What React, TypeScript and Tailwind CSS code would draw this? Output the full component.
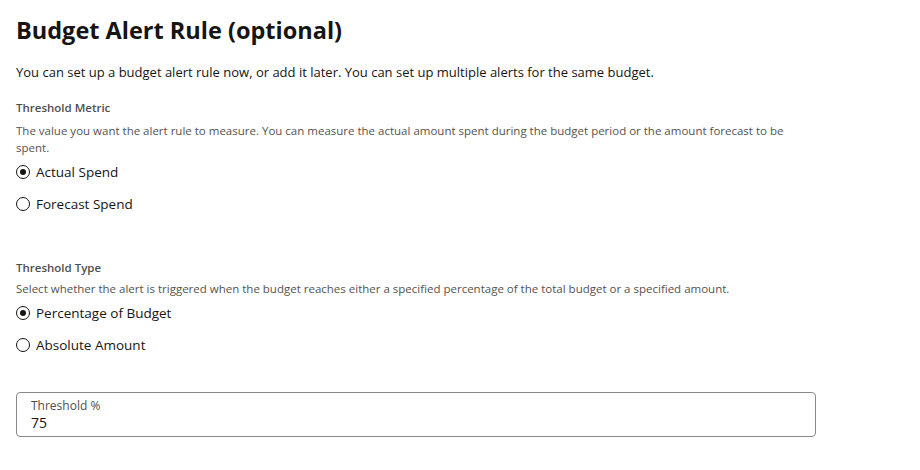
import React, { useState } from "react";

const font = { fontFamily: '"Open Sans", "Noto Sans", sans-serif' };

interface RadioOption {
  value: string;
  label: string;
}

function RadioGroup({
  options,
  value,
  onChange,
}: {
  options: RadioOption[];
  value: string;
  onChange: (v: string) => void;
}) {
  return (
    <div className="flex flex-col">
      {options.map((opt) => {
        const checked = opt.value === value;
        return (
          <label
            key={opt.value}
            className="flex h-8 cursor-pointer items-center gap-[6px] text-[13.5px] text-[#161513]"
            onClick={() => onChange(opt.value)}
          >
            <span className="flex size-[14px] items-center justify-center rounded-full border-[1.5px] border-[#161513]">
              {checked && <span className="size-[6px] rounded-full bg-[#161513]" />}
            </span>
            <span>{opt.label}</span>
          </label>
        );
      })}
    </div>
  );
}

export default function App() {
  const [metric, setMetric] = useState("actual");
  const [type, setType] = useState("percentage");

  return (
    <div className="min-h-[470px] bg-white" style={font}>
      <div className="ml-4 w-[800px] pt-[14px]">
        {/* Heading */}
        <h1 className="text-[23.5px] font-bold leading-8 text-[#161513]">
          Budget Alert Rule (optional)
        </h1>
        <p className="mt-[16px] text-[13px] leading-5 text-[#161513]">
          You can set up a budget alert rule now, or add it later. You can set up multiple alerts for the same budget.
        </p>

        {/* Threshold metric */}
        <div className="mt-[18px] text-[11.5px] font-semibold leading-4 text-[#4f4e4c]">Threshold Metric</div>
        <p className="mt-[6px] text-[11.5px] leading-[17px] text-[#55534f]">
          The value you want the alert rule to measure. You can measure the actual amount spent during the budget period or the amount forecast to be spent.
        </p>
        <RadioGroup
          value={metric}
          onChange={setMetric}
          options={[
            { value: "actual", label: "Actual Spend" },
            { value: "forecast", label: "Forecast Spend" },
          ]}
        />

        {/* Threshold type */}
        <div className="mt-10 text-[11.5px] font-semibold leading-4 text-[#4f4e4c]">Threshold Type</div>
        <p className="mt-[4px] text-[11.5px] leading-[17px] text-[#55534f]">
          Select whether the alert is triggered when the budget reaches either a specified percentage of the total budget or a specified amount.
        </p>
        <RadioGroup
          value={type}
          onChange={setType}
          options={[
            { value: "percentage", label: "Percentage of Budget" },
            { value: "absolute", label: "Absolute Amount" },
          ]}
        />

        {/* Threshold input */}
        <div className="mt-[31px] flex h-[45px] flex-col justify-center rounded-[4px] border border-[#8a8987] px-[14px]">
          <span className="text-[12px] leading-4 text-[#4f4e4c]">Threshold %</span>
          <span className="text-[14px] leading-[18px] text-[#161513]">75</span>
        </div>
      </div>
    </div>
  );
}
